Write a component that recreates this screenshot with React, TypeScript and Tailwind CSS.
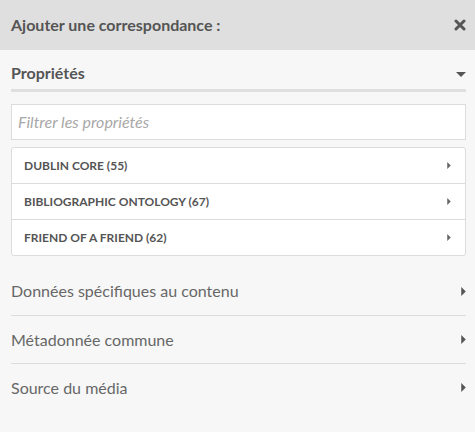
import React from "react";

const CaretRight = ({ w, h, cls }: { w: number; h: number; cls?: string }) => (
  <svg width={w} height={h} viewBox="0 0 4 8" className={cls}>
    <path d="M0 0 L4 4 L0 8 Z" fill="currentColor" />
  </svg>
);

export default function App() {
  const vocabs = ["DUBLIN CORE (55)", "BIBLIOGRAPHIC ONTOLOGY (67)", "FRIEND OF A FRIEND (62)"];
  const sections = ["Données spécifiques au contenu", "Métadonnée commune", "Source du média"];
  return (
    <div className="h-[432px] w-[475px] bg-[#f7f7f7] text-[#555]" style={{ fontFamily: "Lato, 'Open Sans', sans-serif" }}>
      <div className="h-[50px] bg-[#dfdfdf] flex items-center justify-between pl-[11px] pr-[9px]">
        <span className="text-[16px] font-bold text-[#555]">Ajouter une correspondance :</span>
        <svg width="12" height="12" viewBox="0 0 12 12" className="text-[#555]">
          <path d="M2 2 L10 10 M10 2 L2 10" stroke="currentColor" strokeWidth="3" strokeLinecap="round" />
        </svg>
      </div>
      <div className="px-[11px] pr-[9px]">
        <div className="h-[42px] flex items-start justify-between border-b-[3px] border-[#dfdfdf]">
          <span className="mt-[11px] text-[16px] leading-[24px] font-bold">Propriétés</span>
          <svg width="10" height="5" viewBox="0 0 10 5" className="mt-[22px]">
            <path d="M0 0 L10 0 L5 5 Z" fill="#555" />
          </svg>
        </div>
        <div className="mt-[12px] h-[36px] bg-white border border-[#dcdcdc] flex items-center px-[6px]">
          <span className="text-[16px] italic text-[#a8a8a8]">Filtrer les propriétés</span>
        </div>
        <div className="mt-[7px] bg-white border border-[#dcdcdc] rounded-[3px]">
          {vocabs.map((v, i) => (
            <div key={v} className={"flex items-center justify-between pl-[12px] pr-[14px] " + (i > 0 ? "h-[36px] border-t border-[#dcdcdc]" : "h-[35px]")}>
              <span className="text-[12px] font-bold text-[#555]">{v}</span>
              <CaretRight w={4} h={7} cls="text-[#666]" />
            </div>
          ))}
        </div>
        <div className="mt-[11px]">
          {sections.map((s, i) => (
            <div key={s} className={"h-[48px] flex items-center justify-between " + (i > 0 ? "border-t border-[#dcdcdc]" : "")}>
              <span className="text-[16px] text-[#676767]">{s}</span>
              <CaretRight w={5} h={9} cls="text-[#555]" />
            </div>
          ))}
        </div>
      </div>
    </div>
  );
}
